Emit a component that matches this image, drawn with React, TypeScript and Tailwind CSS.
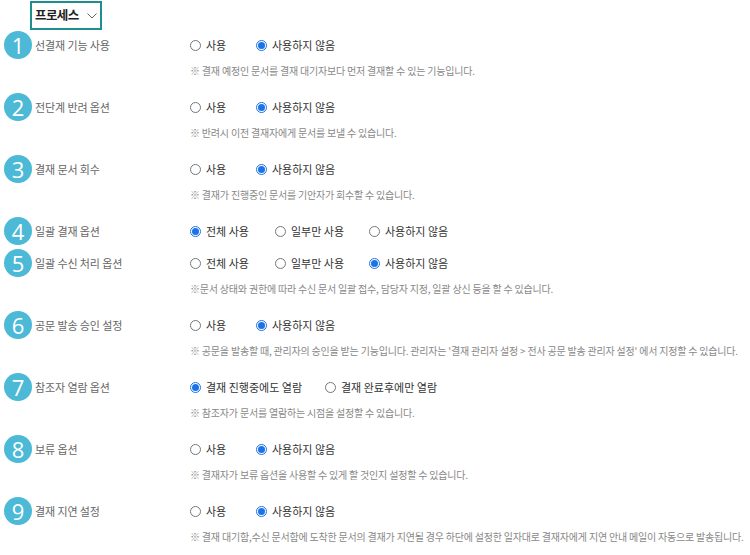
import React from "react";

type Opt = { label: string; checked?: boolean };
type Row = { n: number; label: string; opts: Opt[]; gaps: number[]; desc?: string };

const rows: Row[] = [
  { n: 1, label: "선결재 기능 사용", opts: [{ label: "사용" }, { label: "사용하지 않음", checked: true }], gaps: [66], desc: "※ 결재 예정인 문서를 결재 대기자보다 먼저 결재할 수 있는 기능입니다." },
  { n: 2, label: "전단계 반려 옵션", opts: [{ label: "사용" }, { label: "사용하지 않음", checked: true }], gaps: [66], desc: "※ 반려시 이전 결재자에게 문서를 보낼 수 있습니다." },
  { n: 3, label: "결재 문서 회수", opts: [{ label: "사용" }, { label: "사용하지 않음", checked: true }], gaps: [66], desc: "※ 결재가 진행중인 문서를 기안자가 회수할 수 있습니다." },
  { n: 4, label: "일괄 결재 옵션", opts: [{ label: "전체 사용", checked: true }, { label: "일부만 사용" }, { label: "사용하지 않음" }], gaps: [85, 94] },
  { n: 5, label: "일괄 수신 처리 옵션", opts: [{ label: "전체 사용" }, { label: "일부만 사용" }, { label: "사용하지 않음", checked: true }], gaps: [85, 94], desc: "※문서 상태와 권한에 따라 수신 문서 일괄 접수, 담당자 지정, 일괄 상신 등을 할 수 있습니다." },
  { n: 6, label: "공문 발송 승인 설정", opts: [{ label: "사용" }, { label: "사용하지 않음", checked: true }], gaps: [66], desc: "※ 공문을 발송할 때, 관리자의 승인을 받는 기능입니다. 관리자는 '결재 관리자 설정 > 전사 공문 발송 관리자 설정' 에서 지정할 수 있습니다." },
  { n: 7, label: "참조자 열람 옵션", opts: [{ label: "결재 진행중에도 열람", checked: true }, { label: "결재 완료후에만 열람" }], gaps: [135], desc: "※ 참조자가 문서를 열람하는 시점을 설정할 수 있습니다." },
  { n: 8, label: "보류 옵션", opts: [{ label: "사용" }, { label: "사용하지 않음", checked: true }], gaps: [66], desc: "※ 결재자가 보류 옵션을 사용할 수 있게 할 것인지 설정할 수 있습니다." },
  { n: 9, label: "결재 지연 설정", opts: [{ label: "사용" }, { label: "사용하지 않음", checked: true }], gaps: [66], desc: "※ 결재 대기함,수신 문서함에 도착한 문서의 결재가 지연될 경우 하단에 설정한 일자대로 결재자에게 지연 안내 메일이 자동으로 발송됩니다." },
];

function Radio({ checked }: { checked?: boolean }) {
  return checked ? (
    <span className="w-[11px] h-[11px] rounded-full border border-[#1a73e8] flex items-center justify-center shrink-0">
      <span className="w-[7px] h-[7px] rounded-full bg-[#1a73e8]" />
    </span>
  ) : (
    <span className="w-[11px] h-[11px] rounded-full border border-[#777] bg-white shrink-0" />
  );
}

export default function App() {
  return (
    <div
      className="w-[750px] h-[555px] bg-white overflow-hidden relative"
      style={{ fontFamily: '"Noto Sans CJK KR", "Noto Sans", sans-serif' }}
    >
      <div className="pl-[30px] pt-[1px]">
        <div className="w-[72px] h-[29px] border-2 border-[#1e8e8e] flex items-center pl-[3px] gap-[8px] whitespace-nowrap">
          <span className="text-[12.5px] font-bold text-[#222] leading-none tracking-[-0.6px]">프로세스</span>
          <svg width="10" height="6" viewBox="0 0 10 6" fill="none" stroke="#666" strokeWidth="1" className="shrink-0">
            <path d="M0.5 0.5 L5 5 L9.5 0.5" />
          </svg>
        </div>
      </div>
      <div className="pt-[1px]">
        {rows.map((r) => (
          <div key={r.n} className={r.desc ? "h-[62px]" : "h-[32px]"}>
            <div className="flex items-center h-[28px]">
              <div className="ml-[4px] w-[28px] h-[28px] rounded-full bg-[#4cb9d6] flex items-center justify-center shrink-0">
                <span
                  className="text-white text-[22px] leading-none"
                  style={{ fontFamily: '"Open Sans", "Liberation Sans", sans-serif' }}
                >
                  {r.n}
                </span>
              </div>
              <span className="ml-[3px] w-[155px] text-[11px] text-[#666] tracking-[-0.1px]">{r.label}</span>
              <div className="flex items-center">
                {r.opts.map((o, i) => (
                  <div
                    key={i}
                    className="flex items-center gap-[5px]"
                    style={{ width: i < r.gaps.length ? r.gaps[i] : undefined }}
                  >
                    <Radio checked={o.checked} />
                    <span className="text-[11px] text-[#333] whitespace-nowrap">{o.label}</span>
                  </div>
                ))}
              </div>
            </div>
            {r.desc && (
              <div className="pl-[190px] mt-[3px] h-[16px] flex items-center text-[10px] text-[#888] whitespace-nowrap tracking-[-0.2px]">
                {r.desc}
              </div>
            )}
          </div>
        ))}
      </div>
    </div>
  );
}
